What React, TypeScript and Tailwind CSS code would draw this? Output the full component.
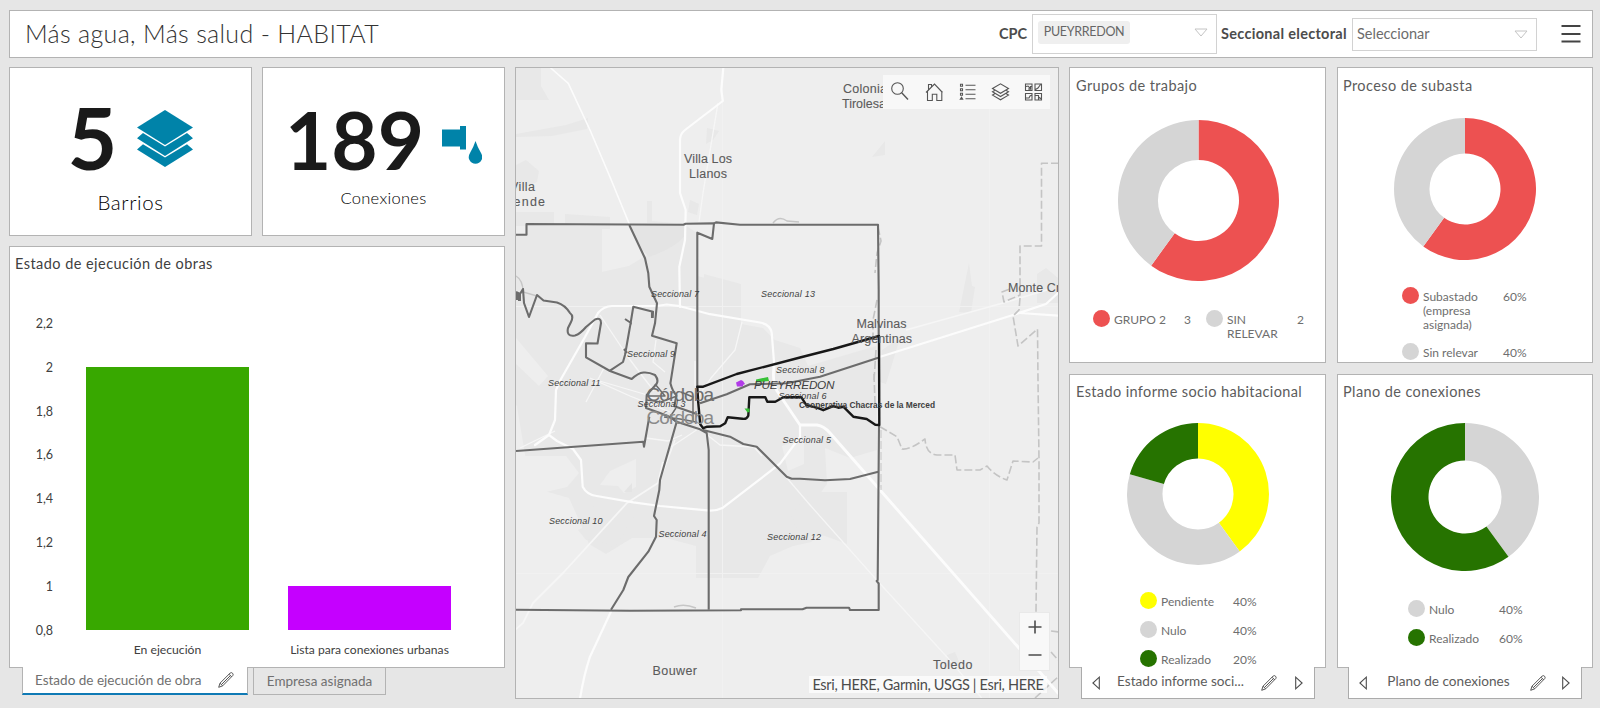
import React from "react";

type Slice = { value: number; color: string };
type LegendRow = { label: string; value: string; color: string };

const GREY = "#d5d5d5";
const RED = "#ed5151";
const GREEN = "#267300";
const YELLOW = "#ffff00";

function Donut({ slices, r, inner, className }: { slices: Slice[]; r: number; inner: number; className: string }) {
  const total = slices.reduce((s, x) => s + x.value, 0);
  const point = (radius: number, t: number) => {
    const a = t * Math.PI * 2 - Math.PI / 2;
    return `${(Math.cos(a) * radius).toFixed(2)} ${(Math.sin(a) * radius).toFixed(2)}`;
  };
  let start = 0;
  return (
    <svg viewBox={`${-r} ${-r} ${r * 2} ${r * 2}`} width={r * 2} height={r * 2} className={className}>
      {slices.map((s, i) => {
        const t0 = start / total;
        start += s.value;
        const t1 = start / total;
        const large = t1 - t0 > 0.5 ? 1 : 0;
        return (
          <path
            key={i}
            fill={s.color}
            d={`M${point(r, t0)}A${r} ${r} 0 ${large} 1 ${point(r, t1)}L${point(inner, t1)}A${inner} ${inner} 0 ${large} 0 ${point(inner, t0)}Z`}
          />
        );
      })}
    </svg>
  );
}

function Swatch({ color }: { color: string }) {
  return <span className="h-[17px] w-[17px] shrink-0 rounded-full" style={{ backgroundColor: color }} />;
}

function LegendList({ rows, labelClass }: { rows: LegendRow[]; labelClass: string }) {
  return (
    <ul className="flex flex-col gap-[12px] text-[12px] leading-[13.8px] text-[#6e6e6e]">
      {rows.map((row) => (
        <li key={row.label} className="flex items-start gap-[4px]">
          <Swatch color={row.color} />
          <span className={`pt-[3px] ${labelClass}`}>{row.label}</span>
          <span className="pt-[3px]">{row.value}</span>
        </li>
      ))}
    </ul>
  );
}

function Pencil() {
  return (
    <svg viewBox="0 0 16 16" className="h-4 w-4 shrink-0" fill="none" stroke="#555" strokeWidth="1">
      <path d="M.7 15.3 2 11.2 12.2 1q1.2-.9 2.3.2t.3 2.3L4.7 13.8ZM2 11.2l2.7 2.6M11 2.2 13.8 5M3.6 12.4 12.4 3.6" />
    </svg>
  );
}

function Arrow({ dir }: { dir: "left" | "right" }) {
  return (
    <svg viewBox="0 0 8 14" className="h-[14px] w-[8px] shrink-0" fill="none" stroke="#4c4c4c" strokeWidth="1.1">
      <path d={dir === "left" ? "M7.3 1.2v11.6L.9 7Z" : "M.7 1.2v11.6L7.1 7Z"} />
    </svg>
  );
}

function Caret() {
  return (
    <svg viewBox="0 0 14 9" className="h-[9px] w-[14px]" fill="none" stroke="#c4c4c4">
      <path d="M1 1h12L7 8Z" />
    </svg>
  );
}

function PagerTab({ label, className, labelClass }: { label: string; className: string; labelClass: string }) {
  return (
    <div className={`relative z-10 -mt-px flex h-[32px] items-center border border-t-0 border-[#ababab] bg-white text-[13.6px] text-[#5c5c5c] ${className}`}>
      <Arrow dir="left" />
      <span className={`-mt-[3px] text-center ${labelClass}`}>{label}</span>
      <Pencil />
      <span className="flex-1" />
      <Arrow dir="right" />
    </div>
  );
}

const ticks = ["2,2", "2", "1,8", "1,6", "1,4", "1,2", "1", "0,8"];

function BarChart() {
  return (
    <div className="flex h-[350px] pl-[28px] pt-[1px] text-[12.5px] text-[#404040]">
      <div className="flex w-[15px] flex-col items-end">
        {ticks.map((t) => (
          <span key={t} className="h-[43.8px] shrink-0 whitespace-nowrap leading-[16px]">{t}</span>
        ))}
      </div>
      <div className="ml-[33px] flex gap-[39px] pt-[8px]">
        <div className="flex w-[163px] flex-col items-center">
          <div className="h-[43px] shrink-0" />
          <div className="h-[263px] w-full shrink-0 bg-[#38a800]" />
          <span className="mt-[11px] shrink-0 text-[12.2px] leading-[18px]">En ejecución</span>
        </div>
        <div className="flex w-[163px] flex-col items-center">
          <div className="h-[262px] shrink-0" />
          <div className="h-[44px] w-full shrink-0 bg-[#c500ff]" />
          <span className="mt-[11px] shrink-0 whitespace-nowrap text-[12.1px] leading-[18px]">Lista para conexiones urbanas</span>
        </div>
      </div>
    </div>
  );
}

type Label = [text: string, x: number, y: number, width: number];

const places: Label[] = [
  ["Villa Los", 684, 162.5, 48],
  ["Llanos", 689, 178, 38],
  ["Villa", 510, 190.5, 25],
  ["Allende", 496, 206, 49],
  ["Colonia", 843, 92.5, 44],
  ["Tirolesa", 842, 108, 44],
  ["Malvinas", 856.5, 327.5, 50],
  ["Argentinas", 851.5, 343, 60.5],
  ["Monte Cristo", 1008, 292, 72],
  ["Bouwer", 652.5, 675.3, 44.5],
  ["Toledo", 933, 669, 39.5],
];

const sections: Label[] = [
  ["Seccional 7", 651, 296.5, 48],
  ["Seccional 13", 761, 297, 54],
  ["Seccional 9", 627, 357, 48],
  ["Seccional 8", 776, 373, 48.5],
  ["Seccional 6", 778.5, 399, 48],
  ["Seccional 11", 548, 385.7, 52.5],
  ["Seccional 3", 637.5, 406.5, 48],
  ["Seccional 5", 782.5, 442.5, 48.5],
  ["Seccional 10", 549, 524, 53.5],
  ["Seccional 4", 658.5, 536.5, 48],
  ["Seccional 12", 767, 539.5, 54],
];

function CityMap() {
  return (
    <svg viewBox="516 68 542 630" className="block h-[630px] w-[542px]" fill="none" fontFamily="'Liberation Sans', Arial, sans-serif">
      <rect x="516" y="68" width="543" height="631" fill="#eeeeee" />
      <g fill="#e8e8e8">
        <path d="M516 68h25l0 18 8 14h-33ZM516 134l50-9 22-7-1 11-35 7-36 1ZM516 165l10-5 13 11-2 11-21 9ZM565 214l45 3 0 12h-45ZM516 212h38v14h-38ZM647 201h5v20l22 2h-27ZM690 200l9 4-2 11-9-3ZM707 128l12 3-6 9-7 4ZM872 157l13-16v14ZM959 312l10-49 3 23 3 1-4 26ZM1037 303v-29l9-6 12 10v25ZM704 274l37 10v40l-37 0Z" />
        <path d="M516 235h10v-10h76v47l27-6 50-31 6-10 12 8v43l44 10v38l22 4 12 12 25 8 8 18 68-20 1 104-27 8-25-10 2 36-16 22 14 22-14 14-18 4-23 10-12 22h-62v-32l-30-8-34 0-26 16-17-10-10-24-10-22-42-12-18-14 18-6-10-60-30-22-22-24Z" />
        <path d="M812 492h35v52l-22-8-28-6-6-16ZM556 484l20-2 8 10-26 2ZM578 530l12-6 8 14-12 2ZM947 655l8-3 5 12-13 2ZM882 350l18-12-14 46-6-2ZM593 498h20l22 16-20 34-21-10Z" />
      </g>
      <g fill="#eeeeee">
        <path d="M610 471l26-12v28l-12 6-6-7-18-1ZM782 446l22-8v26l-16 7ZM516 338l32 38-9 10-23-22ZM516 456h50l13 17-12 14-51 12Z" />
      </g>
      <path d="M624 492l8-9v9Z" fill="#e4e4e4" />
      <path d="M629 226l56 0v9q-8 12-36 22l-7-7Z" fill="#e4e4e4" />
      <g stroke="#f1f1f1" strokeWidth="1">
        <path d="M722.5 68v631M989.5 108v591M516 306.5h543M516 573.5h543" />
      </g>
      <g stroke="#f6f6f6" strokeWidth="1.3" strokeLinejoin="round">
        <path d="M718 103 703 193 699 222M742 322 735 350 711 378 696 400M695 361v25M600 315l28 42 12 16 14 18M596 380l48 14 26 12M604 368l-18 34M646 438l22 3 14-6M706 434l14 11 34 2 8 9M656 340l-3 22 12 10M590 378l40 18 40 16M671 447l30-20M520 448l35-17" />
        <path d="M780 470 810 505 876.7 580 946.7 656.7 981.7 698" />
        <path d="M663 462l-5 21-31 20-64 70-30 30-10 20-8 7" strokeWidth="1.8" />
        <path d="M675 440 660 480" />
        <path d="M906 330 1003 303 1047 290" strokeWidth="1.8" />
      </g>
      <g stroke="#fcfcfc" strokeWidth="2.2" strokeLinejoin="round" strokeLinecap="round">
        <path d="M550.7 68l17.6 15.3L590 130l20 47 19.3 47" strokeWidth="1.6" />
        <path d="M723.3 68l-2 22 1.5 11-37.8 29q-5 4-5 10v53l5.7 17-.7 30-5.7 27 .7 40" />
        <path d="M598 313q6-7 14-7h44.7l10-1.5 13.3 1.7 30 8 50 8.3q10 2 11.7 10l2.6 33.4" />
        <path d="M774 367q-2 14 3 24l23 34h17q7 1 13 8l50 57 138 157 40 46" strokeWidth="2.8" />
        <path d="M598 313l-13 24-24 42-5 11-1 30-6 15-14 10M549 435l8 6 16 8 8 11 1.7 26.7q4 8 14 9.3l36.6 6.3 26.7 3.7 50 4.7q7 0 13-3l57-44 20-26.7V425" />
        <path d="M611.7 610 590 656.7q-6 18-10 42" />
        <path d="M878 357.5 1013 315l33-11 12-11M1020 313l39 2.7" />
      </g>
      <g stroke="#c4c4c4" strokeWidth="1.6" strokeDasharray="8 3" strokeLinejoin="round">
        <path d="M1059 163.3h-17.5V246H1020v49l-16 7-2-10 8-3M1020 298l-1 12-6 6 5 30 19.5-17L1038 380l1 80v63l-2 4-1 84.700" />
        <path d="M880 426.7l17 10 5 12.3q8 1 23-10 1 15 12 16h18l2 15h23l7-4q8 10 20 14l6-19 20 1 5-4M1051 631l8 1M1051 652l8 9M1035 698l24-22M874 374l1 29" />
        <path d="M878 227l3 14-4 12-2 20M877 300l-4 20v20M876 350l-2 30" />
        <path d="M881 430v60" strokeWidth="1" />
      </g>
      <path d="M773 223q6-8 14-2l12 1M674 607q10-4 22 1M516 276q7 4 7 16l14 4" stroke="#c6c6c6" strokeWidth="1.4" />
      <g stroke="#6c6c6c" strokeWidth="2.1" strokeLinejoin="round">
        <path d="M516 234.7h10.5V224l103 .5 54 .2 2-1 28.5-.3 2-1 24 2.3h138l.7 65v46" />
        <path d="M879 425l-1.3 155-1 1 2 2.5v26.5H850l-1-2.3h-42.5l-4 1.5H741v1L630 610.7 516 609.7" />
        <path d="M629.3 225 645 258.3l3.3 15 1 13.4 7.7 16.6-2 20-3 12.4 24.7 7.6-6.3 40q2 8 6 12l-2 11 23 8M714 223.3l-1.7 15.7-15-6.300V387" />
        <path d="M516 292 520 294 523 289 524 303 529 317 537 295 543.5 300.5 557 302.5Q565 305 570 313 574 316 571 322L568 328Q566 337 575 335.500 580 334 586 327L595 319.500Q601 317 601 323L597.500 343.500 586 343.300V357.300L610 371 631.700 379Q638 373 643.500 372.500T655 375Q659 380 656.500 384L646.700 395 646 408 660 413 670 417 676.700 421.700 700 429.300 706.700 433 708.700 450V609.700" />
        <path d="M517 293v7M519.5 293v8" strokeWidth="3" />
        <path d="M652.7 318l.3-6.3-19.7-5-2.6 16L625 355l-2 7-13 8.7M625 319l6 4-1 3M624 349l3 4M652 312v6" />
        <path d="M516 451l127.3-9.3.7 5 5.3-30M676.7 421.7 660 480l-.7 10L654 516l2.7 4-.7 16.7-7.7 15L628.3 577l-5 13L611 609.700" />
        <path d="M703 430l27 6.700 13.300 7.300 13.400 2.700 30 30 5 2H800l25 1.600 25-1.300 28.300-7.300" />
        <path d="M700 403.300l26.700-9 23.300-10 36.700-1 33.300-6.600 58.300-19" />
        <path d="M655 384l10 12-18 0M676 408l-6 9 6 5M647 400l14 2 16-6M681 392l12 5v24M664 417l16 2 16 3" strokeWidth="1.500" />
      </g>
      <path
        d="M697.300 386.700h6L736.700 374 800 357.500l33.300-8.500L879 336l.3 89-4-.300-8.600-5.700-13.400-2.300-10-10-5 1-5-1.500-10 4-5-2-12-3-5-8h-18l-8 4.500h-8l-2-4.500h-16l-1 18.500q-2 4-6 3l-14.600-1.500-2.500 6-5 3-13 .500-4 1.500-3-4-2-22Z"
        stroke="#181818"
        strokeWidth="2.400"
        strokeLinejoin="round"
      />
      <path d="M736 382.500l5-2.500 2 1 2 3-2 1v1.500h-6Z" fill="#b13be8" />
      <path d="M756 379.500l12-2.500 1 4-13 1.500ZM744.500 408.500h5v3.500l-2 .500Z" fill="#36c136" />
      <g fill="#5b5b5b" fontSize="12.500">
        {places.map(([t, x, y, w]) => (
          <text key={t} x={x} y={y} textLength={w} stroke="#5b5b5b" strokeWidth=".1">{t}</text>
        ))}
      </g>
      <g fontSize="19" fill="#6f6f6f">
        <text x="646.500" y="401" textLength="67.500">Córdoba</text>
        <text x="646.500" y="424" textLength="67.500" fill="#8a8a8a">Córdoba</text>
      </g>
      <g fill="#3f3f3f" fontSize="9" fontStyle="italic">
        {sections.map(([t, x, y, w]) => (
          <text key={t} x={x} y={y} textLength={w}>{t}</text>
        ))}
        <text x="754" y="388.800" fontSize="11.800" textLength="80.500">PUEYRREDON</text>
      </g>
      <text x="799" y="407.500" fontSize="8.400" fontWeight="bold" fill="#3f3f3f" textLength="136">Cooperativa Chacras de la Merced</text>
    </svg>
  );
}

function MapToolbar() {
  return (
    <div className="absolute right-[8px] top-[7px] flex h-[34px] w-[167px] items-center bg-[#f8f8f8] pl-[7px]">
      <svg viewBox="0 0 160 24" className="h-6 w-[160px] shrink-0" fill="none" stroke="#555" strokeWidth="1.1">
        <circle cx="7.5" cy="8.5" r="5.8" />
        <path d="M11.7 12.7 18 19.5" strokeWidth="1.4" />
        <path d="M36 12.5 44.5 4l8 8.5M37.5 11v9.5h4.800v-6.300h4.500v6.300h5V11M38.500 9.500V4.500h3v2" />
        <path d="M75.5 5.200h10M75.500 9.700h10M75.500 14.200h10M75.500 18.700h10" />
        <path d="M70.500 4.200h2v2h-2ZM70.500 8.700h2v2h-2ZM70.500 13.200h2v2h-2ZM70.300 19.300l1.200-2 1.200 2Z" />
        <path d="M102.500 8.500l8-4.700 8 4.700-8 4.800ZM104.700 10.500 102.500 11.800l8 4.700 8-4.700-2.200-1.300M104.700 13.800 102.500 15.100l8 4.700 8-4.700-2.200-1.300" />
        <path d="M135.500 4h6.500v6.500h-6.500ZM145 4h6.500v6.500H145ZM135.500 13.500h6.500V20h-6.500ZM145 13.500h6.500V20H145ZM136 6.500l2-.5 2 2v2.500M138 9h2.500V6.500H142M145.500 9.500l2.500-1.500 2.500-3.500M136 18h3l1-2 2-1M145.500 15.500h3v4M148.500 17l3 2" />
      </svg>
    </div>
  );
}

const panel = "border border-[#b3b3b3] bg-white";

export default function App() {
  return (
    <div className="flex h-[708px] w-[1600px] flex-col gap-[9px] overflow-hidden bg-[#e6e6e6] pl-[9px] pt-[10px] font-['Lato',sans-serif] text-[#5c5c5c]">
      <header className={`flex h-[48px] w-[1584px] shrink-0 items-center pl-[15px] ${panel}`}>
        <h1 className="w-[974px] whitespace-nowrap text-[25px] font-light tracking-[0.33px] text-[#333]">Más agua, Más salud - HABITAT</h1>
        <span className="w-[33px] whitespace-nowrap text-[14.5px] font-bold text-[#4c4c4c]">CPC</span>
        <div className="flex h-[40px] w-[185px] items-center justify-between border border-[#d2d2d2] pb-[3px] pl-[5px] pr-[8px]">
          <span className="flex h-[23px] w-[92px] items-center justify-center rounded-[3px] bg-[#efefef] text-[12.5px] tracking-[-0.3px] text-[#666]">PUEYRREDON</span>
          <Caret />
        </div>
        <span className="w-[135px] whitespace-nowrap pl-[4px] text-[14.5px] font-bold tracking-[0.3px] text-[#4c4c4c]">Seccional electoral</span>
        <div className="flex h-[33px] w-[185px] items-center justify-between border border-[#d2d2d2] pl-[4px] pr-[8px] text-[14.5px] text-[#6c6c6c]">
          <span>Seleccionar</span>
          <Caret />
        </div>
        <svg viewBox="0 0 20 20" className="ml-[24px] h-5 w-5" stroke="#444" strokeWidth="2.2">
          <path d="M.5 2h19M.5 10h19M.5 17.500h19" />
        </svg>
      </header>

      <main className="flex items-start">
        <div className="flex w-[496px] flex-col">
          <div className="flex gap-[10px]">
            <section className={`flex h-[169px] w-[243px] flex-col items-center ${panel}`}>
              <div className="flex h-[118px] items-end gap-[20px] pb-[17px] pr-[2px]">
                <span className="pl-[2px] text-[86px] font-bold leading-[64px] text-[#1a1a1a]">5</span>
                <svg viewBox="0 0 56 57" className="mb-[2px] h-[57px] w-[56px]" fill="#0083a9">
                  <path d="M28 0 56 17.500 28 35 0 17.500Z" />
                  <path d="M6 23 28 36.600 50 23 56 28.300 28 46 0 28.300Z" />
                  <path d="M6 34.300 28 47.500 50 34.300 56 39.500 28 57 0 39.500Z" />
                </svg>
              </div>
              <span className="mt-[3px] text-[20.5px] font-light leading-[26px] tracking-[0.6px] text-black">Barrios</span>
            </section>
            <section className={`flex h-[169px] w-[243px] flex-col items-center ${panel}`}>
              <div className="flex h-[118px] items-end gap-[18px] pb-[15px]">
                <span className="text-[80px] font-bold leading-[63px] text-[#1a1a1a]">189</span>
                <svg viewBox="0 0 40 38" className="mb-[7px] h-[38px] w-[40px]" fill="#0083a9">
                  <path d="M0 3.500h18V0h6v23.500h-6V20.500H0Z" />
                  <path d="M33.500 15q2 6 5 11t1 8q-2 3.800-6 3.800t-6-3.800q-2-3 1-8t5-11Z" />
                </svg>
              </div>
              <span className="text-[16.5px] font-light leading-[24px] tracking-[0.3px] text-black">Conexiones</span>
            </section>
          </div>
          <section className={`mt-[10px] h-[422px] w-[496px] ${panel}`}>
            <h2 className="h-[68px] whitespace-nowrap pl-[5px] pt-[6px] text-[14.5px] leading-[22px] tracking-[0.45px] text-[#404040]">Estado de ejecución de obras</h2>
            <BarChart />
          </section>
          <div className="relative z-10 -mt-px flex pl-[13px] text-[13.5px] text-[#707070]">
            <div className="mr-[5px] flex h-[28px] w-[226px] items-center justify-between border border-y-0 border-b-2 border-[#b3b3b3] border-b-[#0f7ab5] bg-white pl-[12px] pr-[13px]">
              <span className="whitespace-nowrap">Estado de ejecución de obra</span>
              <Pencil />
            </div>
            <div className="flex h-[28px] w-[133px] items-center justify-center border border-[#b3b3b3] bg-[#e6e6e6]">Empresa asignada</div>
          </div>
        </div>

        <section className="relative ml-[10px] h-[632px] w-[544px] overflow-hidden border border-[#b3b3b3]">
          <CityMap />
          <MapToolbar />
          <div className="absolute bottom-[27px] right-[8px] flex h-[59px] w-[31px] items-center justify-center border border-[#e9e9e9] bg-[#f8f8f8]">
            <svg viewBox="0 0 14 44" className="h-[44px] w-[14px]" stroke="#4c4c4c" strokeWidth="1.6">
              <path d="M.5 7h13M7 .5v13M.5 35h13" />
            </svg>
          </div>
          <div className="absolute bottom-[5px] right-[11px] flex h-[17px] w-[238px] items-center justify-center whitespace-nowrap bg-white/70 text-[14.5px] tracking-[-0.32px] text-[#4c4c4c]">
            Esri, HERE, Garmin, USGS | Esri, HERE
          </div>
        </section>

        <div className="ml-[10px] flex w-[257px] flex-col">
          <section className={`flex h-[296px] flex-col ${panel}`}>
            <h2 className="whitespace-nowrap pl-[6px] pt-[7px] text-[14.5px] leading-[22px] tracking-[0.4px]">Grupos de trabajo</h2>
            <Donut className="ml-[48px] mt-[23px] shrink-0" r={80.5} inner={40.5} slices={[{ value: 3, color: RED }, { value: 2, color: GREY }]} />
            <div className="mt-[29px] flex pl-[23px] text-[12px] leading-[13.8px] text-[#6e6e6e]">
              <Swatch color={RED} />
              <span className="ml-[4px] w-[70px] pt-[3px]">GRUPO 2</span>
              <span className="w-[22px] pt-[3px]">3</span>
              <Swatch color={GREY} />
              <span className="ml-[4px] w-[70px] pt-[3px]">SIN<br />RELEVAR</span>
              <span className="pt-[3px]">2</span>
            </div>
          </section>
          <section className={`mt-[11px] flex h-[294px] flex-col overflow-hidden ${panel}`}>
            <h2 className="whitespace-nowrap pl-[6px] pt-[6px] text-[14.5px] leading-[22px] tracking-[0.38px]">Estado informe socio habitacional</h2>
            <Donut className="ml-[57px] mt-[20px] shrink-0" r={71} inner={35.5} slices={[{ value: 40, color: YELLOW }, { value: 39.5, color: GREY }, { value: 20.5, color: GREEN }]} />
            <div className="mt-[27px] pl-[70px]">
              <LegendList labelClass="w-[68px]" rows={[
                { label: "Pendiente", value: "40%", color: YELLOW },
                { label: "Nulo", value: "40%", color: GREY },
                { label: "Realizado", value: "20%", color: GREEN },
              ]} />
            </div>
          </section>
          <PagerTab label="Estado informe soci..." className="ml-[12px] w-[234px] pl-[10px] pr-[11px]" labelClass="w-[161px]" />
        </div>

        <div className="ml-[11px] flex w-[256px] flex-col">
          <section className={`flex h-[296px] flex-col overflow-hidden ${panel}`}>
            <h2 className="whitespace-nowrap pl-[5px] pt-[7px] text-[14.5px] leading-[22px] tracking-[0.4px]">Proceso de subasta</h2>
            <Donut className="ml-[56px] mt-[21px] shrink-0" r={71} inner={35.5} slices={[{ value: 60, color: RED }, { value: 40, color: GREY }]} />
            <div className="mt-[27px] pl-[64px]">
              <LegendList labelClass="w-[76px]" rows={[
                { label: "Subastado (empresa asignada)", value: "60%", color: RED },
                { label: "Sin relevar", value: "40%", color: GREY },
              ]} />
            </div>
          </section>
          <section className={`mt-[11px] flex h-[294px] flex-col overflow-hidden ${panel}`}>
            <h2 className="whitespace-nowrap pl-[5px] pt-[6px] text-[14.5px] leading-[22px] tracking-[0.4px]">Plano de conexiones</h2>
            <Donut className="ml-[53px] mt-[20px] shrink-0" r={74} inner={36.5} slices={[{ value: 40, color: GREY }, { value: 60, color: GREEN }]} />
            <div className="mt-[29px] pl-[70px]">
              <LegendList labelClass="w-[66px]" rows={[
                { label: "Nulo", value: "40%", color: GREY },
                { label: "Realizado", value: "60%", color: GREEN },
              ]} />
            </div>
          </section>
          <PagerTab label="Plano de conexiones" className="ml-[11px] w-[234px] pl-[10px] pr-[11px]" labelClass="w-[163px]" />
        </div>
      </main>
    </div>
  );
}
